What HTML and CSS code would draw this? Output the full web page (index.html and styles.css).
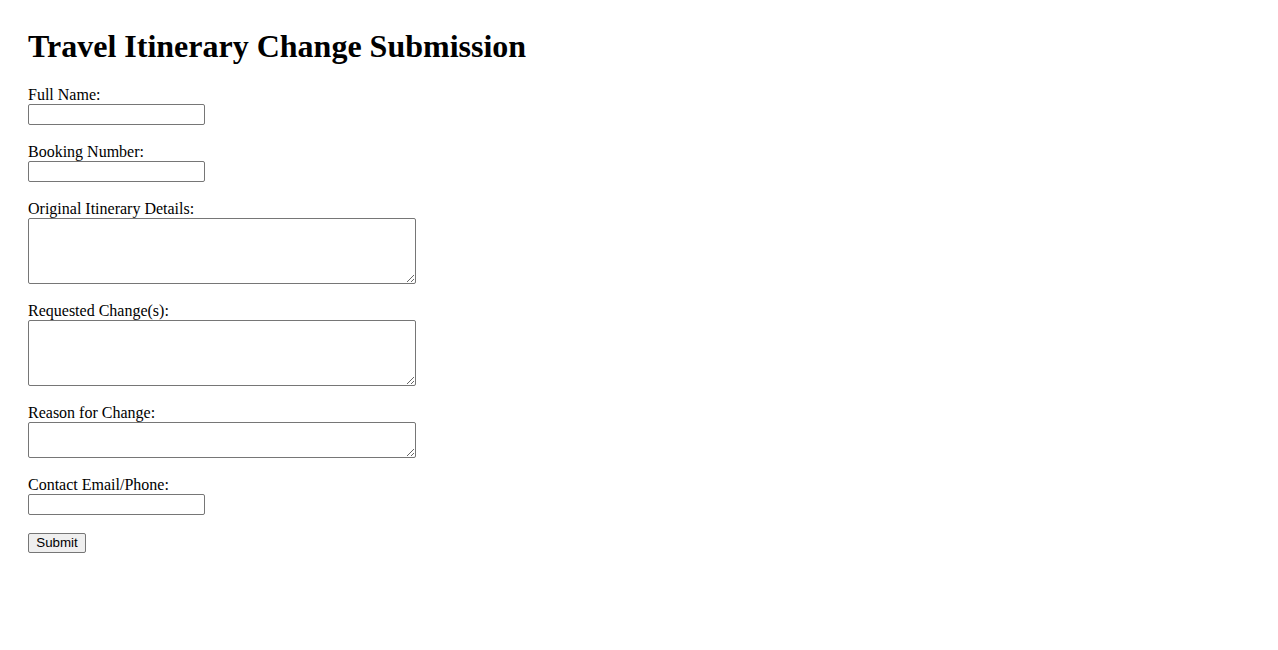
FILE: index.html
```html
<!DOCTYPE html>
<html lang="en">
<head>
<meta charset="utf-8">
<title>Travel Itinerary Change Submission</title>
<link rel="stylesheet" href="styles.css">
</head>
<body>
<main class="page">
  <h1 class="title">Travel Itinerary Change Submission</h1>
  <form class="form">
    <div class="field">
      <label class="label" for="name">Full Name:</label>
      <input class="input" id="name" type="text">
    </div>
    <div class="field">
      <label class="label" for="booking">Booking Number:</label>
      <input class="input" id="booking" type="text">
    </div>
    <div class="field">
      <label class="label" for="orig">Original Itinerary Details:</label>
      <textarea class="area area-tall" id="orig"></textarea>
    </div>
    <div class="field">
      <label class="label" for="req">Requested Change(s):</label>
      <textarea class="area area-tall" id="req"></textarea>
    </div>
    <div class="field">
      <label class="label" for="reason">Reason for Change:</label>
      <textarea class="area area-short" id="reason"></textarea>
    </div>
    <div class="field">
      <label class="label" for="contact">Contact Email/Phone:</label>
      <input class="input" id="contact" type="text">
    </div>
    <div class="actions">
      <button class="button" type="submit">Submit</button>
    </div>
  </form>
</main>
</body>
</html>
```
FILE: styles.css
```css
html, body {
  margin: 0;
  padding: 0;
  background: #ffffff;
}

body {
  font-family: "Liberation Serif", "Times New Roman", serif;
  font-size: 16px;
  color: #000000;
}

.page {
  padding: 28px;
}

.title {
  margin: 0 0 21px 0;
  font-size: 32px;
  font-weight: bold;
  line-height: 37px;
}

.form {
  display: flex;
  flex-direction: column;
  align-items: flex-start;
}

.field {
  display: flex;
  flex-direction: column;
  align-items: flex-start;
  margin-bottom: 18px;
}

.label {
  display: block;
  height: 18px;
  line-height: 18px;
}

.input,
.area,
.button {
  font-family: "Liberation Sans", Arial, sans-serif;
  font-size: 13.33px;
  box-sizing: border-box;
  margin: 0;
}

.input {
  display: block;
  width: 177px;
  height: 21px;
  padding: 1px 2px;
  border: 1px solid #767676;
  border-radius: 2px;
  background: #ffffff;
}

.area {
  display: block;
  width: 388px;
  padding: 2px;
  border: 1px solid #767676;
  border-radius: 2px;
  background: #ffffff;
  font-family: "Liberation Mono", monospace;
}

.area-tall {
  height: 66px;
}

.area-short {
  height: 36px;
}

.button {
  display: block;
  width: 58px;
  height: 20px;
  padding: 1px 6px;
  border: 1px solid #767676;
  border-radius: 2px;
  background: #efefef;
  color: #000000;
  line-height: 16px;
}
```
